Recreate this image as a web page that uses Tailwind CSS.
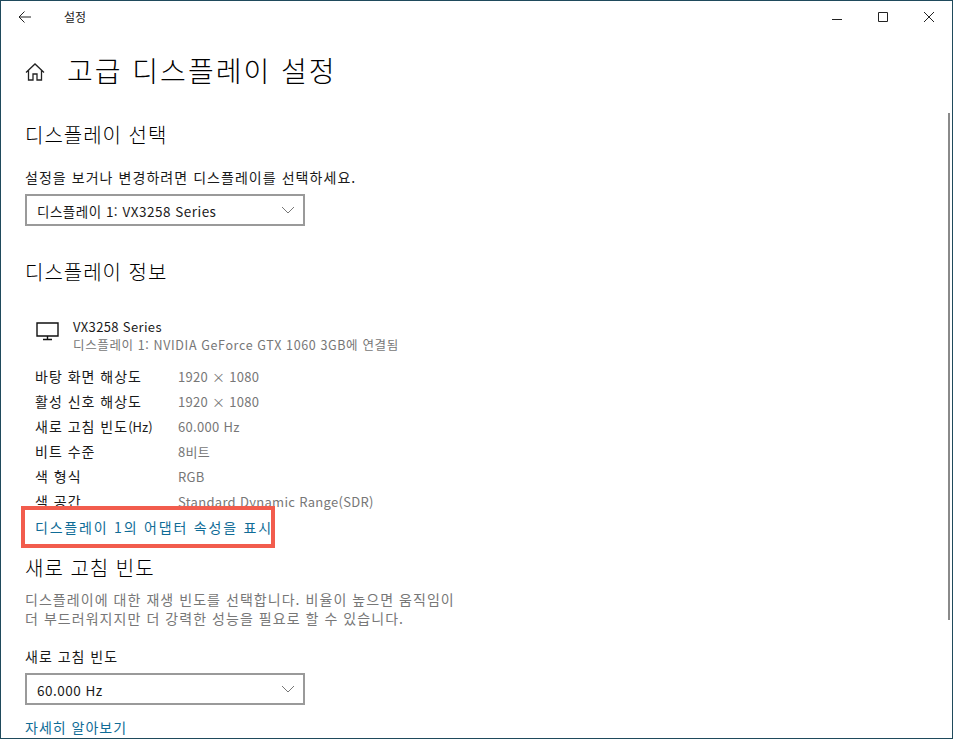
<!DOCTYPE html>
<html lang="ko">
<head>
    <meta charset="UTF-8">
    <title>고급 디스플레이 설정</title>
    <script src="https://cdn.jsdelivr.net/npm/@tailwindcss/browser@4"></script>
</head>
<body class="bg-white overflow-hidden">
    <div class="relative w-[953px] h-[739px] overflow-hidden bg-white border border-[#1f4a5c] text-[#1a1a1a] font-['Noto_Sans_CJK_KR','Noto_Sans',sans-serif]">

        <!-- title bar -->
        <div class="flex items-center h-[32px] pl-[17px] text-[#222]">
            <svg class="w-[14px] h-[14px]" viewBox="0 0 14 14" fill="none" stroke="currentColor" stroke-width="1"><path d="M13 7H1M6.5 1.5 1 7l5.5 5.5"/></svg>
            <span class="ml-[32px] text-[12px]">설정</span>
            <div class="ml-auto flex items-center gap-[36px] pr-[18px]">
                <svg class="w-[10px] h-[10px]" viewBox="0 0 10 10" stroke="currentColor" fill="none"><path d="M0 7.5h10"/></svg>
                <svg class="w-[10px] h-[10px]" viewBox="0 0 10 10" stroke="currentColor" fill="none"><path d="M.5.5h9v9h-9z"/></svg>
                <svg class="w-[10px] h-[10px]" viewBox="0 0 10 10" stroke="currentColor" fill="none"><path d="M0 0l10 10M10 0 0 10"/></svg>
            </div>
        </div>

        <div class="pl-[24px]">
            <!-- page heading -->
            <div class="flex items-center h-[50px] mt-[12px]">
                <svg class="w-[20px] h-[20px] mt-[3px] text-[#222]" viewBox="0 0 20 20" fill="none" stroke="currentColor" stroke-width="1.3"><path d="M1 10.5 10 2l9 8.5M3.5 8.5V18H8v-6h4v6h4.500V8.500"/></svg>
                <h1 class="ml-[22px] text-[28px] text-black font-light tracking-[2px] leading-none">고급 디스플레이 설정</h1>
            </div>

            <h2 class="mt-[26px] text-[20px] text-black font-light tracking-[1px] leading-[28px]">디스플레이 선택</h2>
            <p class="mt-[18px] text-[14px] tracking-[1.05px] leading-[20px]">설정을 보거나 변경하려면 디스플레이를 선택하세요.</p>
            <div class="mt-[7px] flex items-center justify-between w-[280px] h-[32px] pl-[10px] pr-[8px] border-2 border-[#9a9a9a] text-[13.5px] tracking-[0.5px]">
                <span class="pt-[3px]">디스플레이 1: VX3258 Series</span>
                <svg class="w-[14px] h-[8px] text-[#777]" viewBox="0 0 14 8" fill="none" stroke="currentColor"><path d="M1 1l6 6 6-6"/></svg>
            </div>

            <h2 class="mt-[32px] text-[20px] text-black font-light tracking-[1px] leading-[28px]">디스플레이 정보</h2>

            <div class="mt-[32px] ml-[11px] flex">
                <svg class="w-[24px] h-[20px] mt-[3px]" viewBox="0 0 24 20" fill="none" stroke="#111" stroke-width="1.400"><path d="M1 2h21v13H1zM11.500 15v3M7 18.500h9"/></svg>
                <div class="ml-[13px]">
                    <div class="text-[13px] tracking-[0.35px] leading-[18px]">VX3258 Series</div>
                    <div class="text-[12.5px] tracking-[0.63px] leading-[18px] text-[#777]">디스플레이 1: NVIDIA GeForce GTX 1060 3GB에 연결됨</div>
                </div>
            </div>

            <dl class="mt-[10px] ml-[10px] grid grid-cols-[143px_1fr] auto-rows-[25px] items-center text-[14px] tracking-[1px]">
                <dt>바탕 화면 해상도</dt><dd class="text-[13px] tracking-[0.3px] text-[#777]">1920 × 1080</dd>
                <dt>활성 신호 해상도</dt><dd class="text-[13px] tracking-[0.3px] text-[#777]">1920 × 1080</dd>
                <dt>새로 고침 빈도<span class="text-[13px] tracking-normal">(Hz)</span></dt><dd class="text-[13px] tracking-[0.3px] text-[#777]">60.000 Hz</dd>
                <dt>비트 수준</dt><dd class="text-[13px] tracking-[0.3px] text-[#777]">8비트</dd>
                <dt>색 형식</dt><dd class="text-[13px] tracking-[0.3px] text-[#777]">RGB</dd>
                <dt>색 공간</dt><dd class="text-[13px] tracking-[0.3px] text-[#777]">Standard Dynamic Range(SDR)</dd>
            </dl>

            <!-- red highlight sits over the last row -->
            <div class="relative -mt-[8px] -ml-[4px] w-[254px] h-[42px] border-4 border-[#f25c4d] bg-white flex items-center pl-[10px] text-[14px] whitespace-nowrap tracking-[1.8px] text-[#0f6c97]">디스플레이 1의 어댑터 속성을 표시</div>

            <h2 class="mt-[6px] text-[20px] text-black font-light tracking-[1px] leading-[28px]">새로 고침 빈도</h2>
            <p class="mt-[8px] text-[14px] tracking-[1.05px] leading-[19px] text-[#777]">디스플레이에 대한 재생 빈도를 선택합니다. 비율이 높으면 움직임이<br>더 부드러워지지만 더 강력한 성능을 필요로 할 수 있습니다.</p>
            <p class="mt-[18px] text-[14px] tracking-[1px] leading-[20px]">새로 고침 빈도</p>
            <div class="mt-[7px] flex items-center justify-between w-[280px] h-[32px] pl-[10px] pr-[8px] border-2 border-[#9a9a9a] text-[13.5px] tracking-[0.5px]">
                <span class="pt-[3px]">60.000 Hz</span>
                <svg class="w-[14px] h-[8px] text-[#777]" viewBox="0 0 14 8" fill="none" stroke="currentColor"><path d="M1 1l6 6 6-6"/></svg>
            </div>
            <a class="block mt-[12px] text-[14px] tracking-[1px] leading-[20px] text-[#0f6c97]">자세히 알아보기</a>
        </div>

        <!-- scrollbar thumb -->
        <div class="absolute top-[112px] right-[2px] w-[2px] h-[507px] bg-[#8a8a8a]"></div>
    </div>
</body>
</html>
